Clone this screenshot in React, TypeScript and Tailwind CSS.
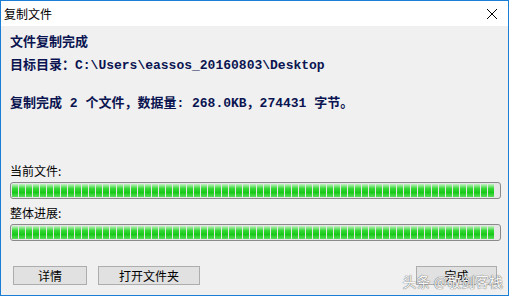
import React from 'react';

const segments = Array.from({ length: 69 });

const ProgressBar = () => (
  <div className="h-[17px] rounded-[3px] border border-[#8a8a8a] bg-[#e6e6e6] p-[1px] flex gap-[1px] overflow-hidden">
    {segments.map((_, i) => (
      <div
        key={i}
        className="w-[6px] shrink-0 h-full bg-[linear-gradient(#c4f2c4,#35d835_35%,#18c818_65%,#5ade5a)]"
      />
    ))}
  </div>
);

const Button = ({ label, className }: { label: string; className: string }) => (
  <div
    className={`h-[19px] border border-[#adadad] bg-[#e1e1e1] flex items-center justify-center text-[12px] text-black ${className}`}
  >
    {label}
  </div>
);

const App = () => {
  return (
    <div className="w-[509px] h-[296px] border border-[#1a7fd4] bg-[#f0f0f0] flex flex-col font-['Noto_Sans_CJK_SC',sans-serif]">
      <div className="h-[25px] bg-white flex items-center justify-between pl-[3px] pr-[8px]">
        <span className="text-[12px] text-black">复制文件</span>
        <svg width="12" height="12" viewBox="0 0 12 12" className="mr-[2px]">
          <path d="M1 1 L11 11 M11 1 L1 11" stroke="#000" strokeWidth="1" />
        </svg>
      </div>
      <div className="flex-1 flex flex-col px-[9px] pt-[8px] text-[#0a1450] font-bold text-[13px] font-['Liberation_Mono','Noto_Sans_CJK_SC',monospace]">
        <div className="leading-[17px]">文件复制完成</div>
        <div className="leading-[17px] mt-[6px]">目标目录：C:\Users\eassos_20160803\Desktop</div>
        <div className="leading-[17px] mt-[21px]">复制完成 2 个文件，数据量: 268.0KB，274431 字节。</div>
        <div className="mt-[51px] font-normal text-black text-[12px] font-['Noto_Sans_CJK_SC',sans-serif] leading-[16px]">
          当前文件:
        </div>
        <div className="mt-[3px] mr-[-2px]">
          <ProgressBar />
        </div>
        <div className="mt-[6px] font-normal text-black text-[12px] font-['Noto_Sans_CJK_SC',sans-serif] leading-[16px]">
          整体进展:
        </div>
        <div className="mt-[3px] mr-[-2px]">
          <ProgressBar />
        </div>
        <div className="mt-[25px] flex items-center font-normal font-['Noto_Sans_CJK_SC',sans-serif] relative">
          <Button label="详情" className="ml-[3px] w-[74px]" />
          <Button label="打开文件夹" className="ml-[11px] w-[102px]" />
          <Button label="完成" className="ml-auto mr-[2px] w-[81px]" />
          <span className="absolute right-[-4px] top-[5px] text-[14px] text-[#f6f6f6] [text-shadow:0_0_1px_#666,0_0_1px_#666]">
            头条 @敬剑客栈
          </span>
        </div>
      </div>
    </div>
  );
};

export default App;
